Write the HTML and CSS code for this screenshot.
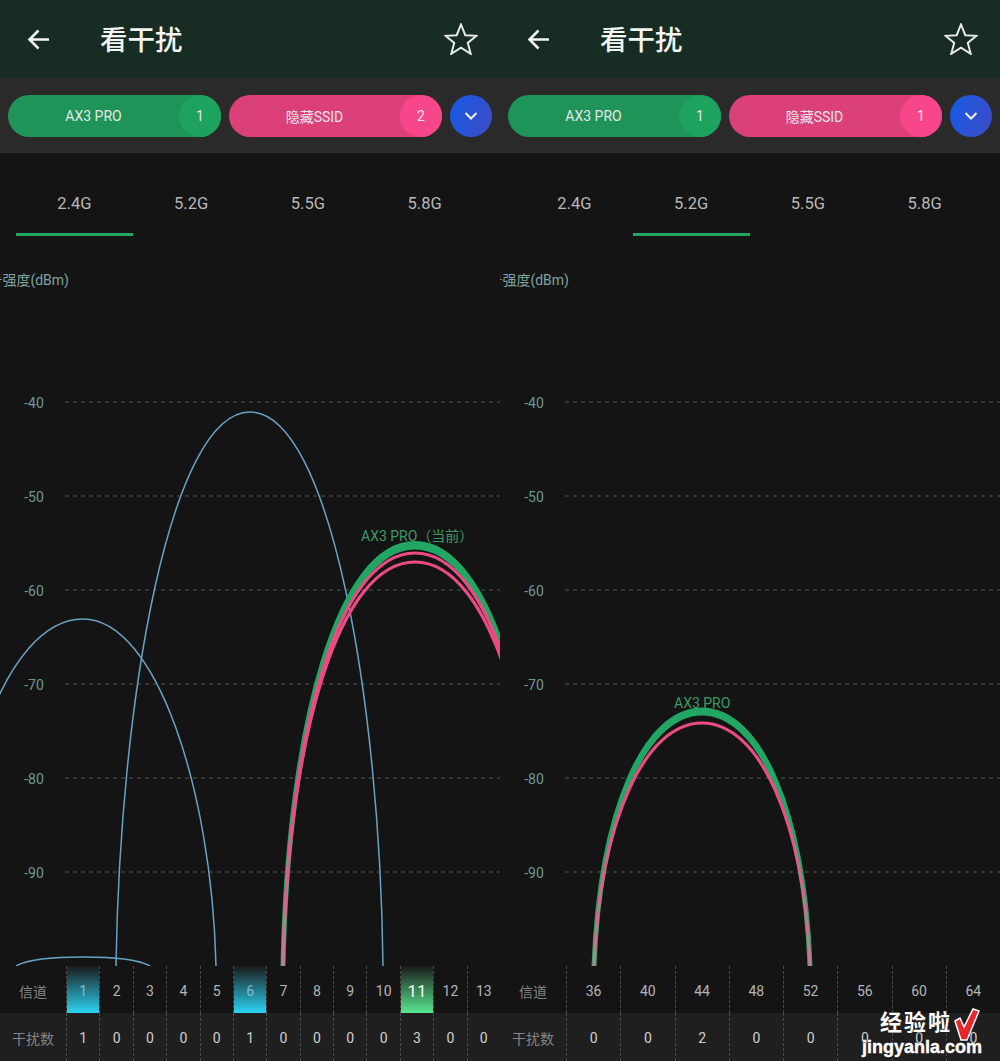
FILE: index.html
```html
<!DOCTYPE html>
<html lang="zh-CN">

<head>
    <meta charset="UTF-8">
    <meta name="viewport" content="width=device-width, initial-scale=1.0">
    <title>看干扰</title>
    <link rel="stylesheet" href="styles.css">
</head>

<body>
    <div id="screens">
        <section class="panel">
            <header class="top-bar">
                <svg class="back-icon" viewBox="0 0 24 24"><path d="M22 11.500H3M11.500 2.500L2.500 11.500L11.500 20.500"/></svg>
                <h1>看干扰</h1>
                <svg class="star-icon" viewBox="0 0 34 32"><path d="M17 1.500L21.300 12.200L32.500 12.800L23.800 19.900L26.700 30.800L17 24.700L7.300 30.800L10.200 19.900L1.500 12.800L12.700 12.200Z"/></svg>
            </header>
            <div class="filter-bar">
                <div class="pill pill-green"><span class="pill-name">AX3 PRO</span><span class="pill-count">1</span></div>
                <div class="pill pill-pink"><span class="pill-name">隐藏SSID</span><span class="pill-count">2</span></div>
                <div class="more-button"><svg viewBox="0 0 14 10"><path d="M1.500 2L7 7.500L12.500 2"/></svg></div>
            </div>
            <nav class="tabs">
                <span class="tab active">2.4G</span>
                <span class="tab">5.2G</span>
                <span class="tab">5.5G</span>
                <span class="tab">5.8G</span>
            </nav>
            <svg class="chart" viewBox="0 236 500 730">
                <defs>
                    <linearGradient id="pink-fade" gradientUnits="userSpaceOnUse" x1="0" y1="800" x2="0" y2="966">
                        <stop offset="0" stop-color="#ec4a85"/>
                        <stop offset="1" stop-color="#bd7c8e"/>
                    </linearGradient>
                </defs>
                <text class="axis-title" x="69" y="285" text-anchor="end">信号强度(dBm)</text>
                <g class="grid">
                    <path d="M65 402H500M65 496H500M65 590H500M65 684H500M65 778H500M65 872H500"/>
                </g>
                <g class="axis">
                    <text x="34" y="408">-40</text>
                    <text x="34" y="502">-50</text>
                    <text x="34" y="596">-60</text>
                    <text x="34" y="690">-70</text>
                    <text x="34" y="784">-80</text>
                    <text x="34" y="878">-90</text>
                </g>
                <path class="curve-blue" d="M116 966C120 700 170 412 250 412C330 412 380 700 383 966"/>
                <path class="curve-blue" d="M-50 966C-52 790 4 619 83 619C156 619 212 790 216 966"/>
                <path class="curve-blue" d="M16 966C30 958 60 957 83 957C106 957 136 958 150 966"/>
                <path class="curve-green" d="M283 966C288 720 340 543.500 415 543.500C490 543.500 542 720 547 966C542 724 490 547 415 547C340 547 288 724 283 966Z"/>
                <path class="curve-pink" stroke="url(#pink-fade)" d="M283 966C288 726 340 553 415 553C490 553 542 726 547 966"/>
                <path class="curve-pink" stroke="url(#pink-fade)" d="M283 966C288 732 340 562 415 562C490 562 542 732 547 966"/>
                <text class="curve-label" x="361" y="541">AX3 PRO（当前）</text>
            </svg>
            <div class="table-row row-channel cols-13">
                <span class="row-name">信道</span>
                <span class="cell cell-blue">1</span><span class="cell">2</span><span class="cell">3</span><span class="cell">4</span><span class="cell">5</span>
                <span class="cell cell-blue">6</span><span class="cell">7</span><span class="cell">8</span><span class="cell">9</span><span class="cell">10</span>
                <span class="cell cell-green">11</span><span class="cell">12</span><span class="cell">13</span>
            </div>
            <div class="table-row row-count cols-13">
                <span class="row-name">干扰数</span>
                <span class="cell">1</span><span class="cell">0</span><span class="cell">0</span><span class="cell">0</span><span class="cell">0</span>
                <span class="cell">1</span><span class="cell">0</span><span class="cell">0</span><span class="cell">0</span><span class="cell">0</span>
                <span class="cell">3</span><span class="cell">0</span><span class="cell">0</span>
            </div>
        </section>

        <section class="panel">
            <header class="top-bar">
                <svg class="back-icon" viewBox="0 0 24 24"><path d="M22 11.500H3M11.500 2.500L2.500 11.500L11.500 20.500"/></svg>
                <h1>看干扰</h1>
                <svg class="star-icon" viewBox="0 0 34 32"><path d="M17 1.500L21.300 12.200L32.500 12.800L23.800 19.900L26.700 30.800L17 24.700L7.300 30.800L10.200 19.900L1.500 12.800L12.700 12.200Z"/></svg>
            </header>
            <div class="filter-bar">
                <div class="pill pill-green"><span class="pill-name">AX3 PRO</span><span class="pill-count">1</span></div>
                <div class="pill pill-pink"><span class="pill-name">隐藏SSID</span><span class="pill-count">1</span></div>
                <div class="more-button"><svg viewBox="0 0 14 10"><path d="M1.500 2L7 7.500L12.500 2"/></svg></div>
            </div>
            <nav class="tabs">
                <span class="tab">2.4G</span>
                <span class="tab active">5.2G</span>
                <span class="tab">5.5G</span>
                <span class="tab">5.8G</span>
            </nav>
            <svg class="chart" viewBox="0 236 500 730">
                <text class="axis-title" x="69" y="285" text-anchor="end">信号强度(dBm)</text>
                <g class="grid">
                    <path d="M65 402H500M65 496H500M65 590H500M65 684H500M65 778H500M65 872H500"/>
                </g>
                <g class="axis">
                    <text x="34" y="408">-40</text>
                    <text x="34" y="502">-50</text>
                    <text x="34" y="596">-60</text>
                    <text x="34" y="690">-70</text>
                    <text x="34" y="784">-80</text>
                    <text x="34" y="878">-90</text>
                </g>
                <path class="curve-green" d="M94 966C100 810 145 710 202 710C259 710 304 810 310 966C304 813 259 713 202 713C145 713 100 813 94 966Z"/>
                <path class="curve-pink" stroke="url(#pink-fade)" d="M94 966C100 820 145 723 202 723C259 723 304 820 310 966"/>
                <text class="curve-label" x="174" y="708">AX3 PRO</text>
            </svg>
            <div class="table-row row-channel cols-8">
                <span class="row-name">信道</span>
                <span class="cell">36</span><span class="cell">40</span><span class="cell">44</span><span class="cell">48</span>
                <span class="cell">52</span><span class="cell">56</span><span class="cell">60</span><span class="cell">64</span>
            </div>
            <div class="table-row row-count cols-8">
                <span class="row-name">干扰数</span>
                <span class="cell">0</span><span class="cell">0</span><span class="cell">2</span><span class="cell">0</span>
                <span class="cell">0</span><span class="cell">0</span><span class="cell">0</span><span class="cell">0</span>
            </div>
        </section>
    </div>

    <div class="watermark">
        <span class="mark-name">经验啦</span>
        <svg class="mark-check" viewBox="0 0 26 34"><path d="M1 13L6 10L10 19L19 1L25 3L13 32L7 32Z"/></svg>
        <span class="mark-url">jingyanla.com</span>
    </div>
</body>

</html>
```

FILE: styles.css
```css
* {
    box-sizing: border-box;
}

body {
    margin: 0;
    width: 1000px;
    height: 1061px;
    overflow: hidden;
    position: relative;
    background-color: #141414;
    font-family: Roboto, "Noto Sans CJK SC", sans-serif;
}

#screens {
    display: flex;
}

.panel {
    width: 500px;
    height: 1061px;
    display: flex;
    flex-direction: column;
    overflow: hidden;
}

.top-bar {
    height: 78px;
    display: flex;
    align-items: center;
    padding: 0 22px 0 27px;
    background-color: #172d23;
}

.top-bar h1 {
    flex: 1;
    margin: 0 0 0 49px;
    padding-top: 3px;
    font-size: 27.500px;
    font-weight: 500;
    line-height: 75px;
    color: #f4f4f4;
}

.back-icon {
    width: 24px;
    height: 24px;
    margin-top: 1px;
    fill: none;
    stroke: #f4f4f4;
    stroke-width: 2.600;
}

.star-icon {
    width: 34px;
    height: 32px;
    fill: none;
    stroke: #e8e8e8;
    stroke-width: 2;
}

.filter-bar {
    height: 75px;
    display: flex;
    align-items: center;
    gap: 8px;
    padding: 0 8px;
    background-color: #2a2a2a;
}

.pill {
    width: 213px;
    height: 42px;
    display: flex;
    align-items: center;
    border-radius: 21px;
    font-size: 14px;
    color: #e6e6e6;
}

.pill-green {
    background-color: #1f9458;
}

.pill-pink {
    background-color: #dc4078;
}

.pill-name {
    flex: 1;
    text-align: center;
}

.pill-count {
    width: 42px;
    height: 42px;
    border-radius: 50%;
    line-height: 42px;
    text-align: center;
}

.pill-green .pill-count {
    background-color: #1ea35e;
}

.pill-pink .pill-count {
    background-color: #f7468a;
}

.more-button {
    width: 42px;
    height: 42px;
    display: flex;
    align-items: center;
    justify-content: center;
    border-radius: 50%;
    background: linear-gradient(110deg, #1459e6, #3f4cc4);
}

.more-button svg {
    width: 14px;
    height: 10px;
    fill: none;
    stroke: #f2f2f2;
    stroke-width: 2;
}

.tabs {
    height: 83px;
    display: flex;
    padding: 0 17px 0 16px;
}

.tab {
    flex: 1;
    padding-top: 40px;
    border-bottom: 3px solid transparent;
    text-align: center;
    font-size: 16.500px;
    line-height: 22px;
    color: #b8b8b8;
}

.tab.active {
    border-bottom-color: #21a560;
}

.chart {
    display: block;
    width: 500px;
    height: 730px;
}

.axis-title {
    font-size: 14px;
    fill: #7fa3a0;
}

.grid path {
    fill: none;
    stroke: #555;
    stroke-dasharray: 4 4;
}

.axis text {
    font-size: 14px;
    text-anchor: middle;
    fill: #6a9a95;
}

.curve-blue,
.curve-pink {
    fill: none;
}

.curve-blue {
    stroke: #68a3c4;
    stroke-width: 1.500;
}

.curve-green {
    fill: #21a763;
    stroke: #21a763;
    stroke-width: 5;
}

.curve-pink {
    stroke-width: 3.200;
}

.curve-label {
    font-size: 14px;
    fill: #3c9a63;
}

.table-row {
    display: grid;
}

.cols-13 {
    grid-template-columns: 66px repeat(13, 1fr);
}

.cols-8 {
    grid-template-columns: 66px repeat(8, 1fr);
}

.row-channel {
    height: 47px;
    background-color: #141414;
}

.row-count {
    height: 48px;
    background-color: #1f1f1f;
}

.row-name,
.cell {
    display: flex;
    align-items: center;
    justify-content: center;
    padding-top: 2px;
    font-size: 14px;
}

.row-name {
    color: #858585;
}

.cell {
    border-left: 1px dashed #4a4a4a;
    color: #b4b4b4;
}

.row-count .cell {
    color: #cfcfcf;
}

.cell-blue {
    background: linear-gradient(#1a1a1a, #2bd3f2) padding-box;
    color: #7fc0d0;
}

.cell-green {
    background: linear-gradient(#1a1a1a, #5ae88f) padding-box;
    font-size: 17px;
    color: #f2fff6;
}

.watermark {
    position: absolute;
    left: 862px;
    top: 1009px;
    width: 126px;
    color: #fff;
    font-weight: 700;
    text-shadow: 0 0 2px #222;
}

.mark-name {
    display: block;
    padding-left: 18px;
    font-size: 22px;
    line-height: 28px;
    letter-spacing: 2px;
}

.mark-check {
    position: absolute;
    left: 92px;
    top: -1px;
    width: 26px;
    height: 34px;
    fill: #e8262a;
    stroke: #fff;
    stroke-width: 1.500;
}

.mark-url {
    display: block;
    font-family: "Liberation Sans", sans-serif;
    font-size: 18px;
    line-height: 20px;
    -webkit-text-stroke: 0.400px #fff;
}
```
